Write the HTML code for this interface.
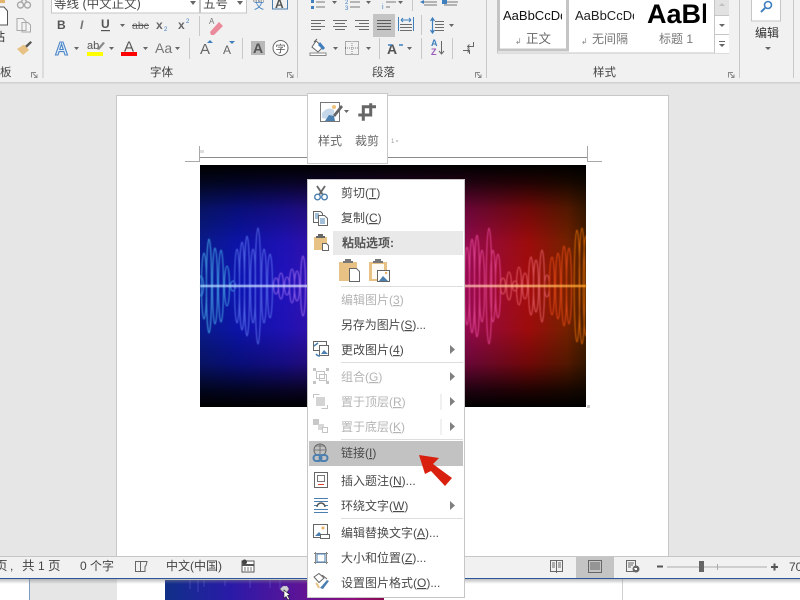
<!DOCTYPE html>
<html><head><meta charset="utf-8"><style>
html,body{margin:0;padding:0;width:800px;height:600px;overflow:hidden;background:#e6e6e6}
svg{display:block}
text{font-family:"Liberation Sans","Noto Sans CJK SC",sans-serif;font-size:12px;fill:#4a4a4a}
.d{fill:#b4b4b4}.b{fill:#333}
.g{font-size:11.5px;fill:#444}
.u{text-decoration:underline}
</style></head><body>
<svg width="800" height="600" viewBox="0 0 800 600" xmlns="http://www.w3.org/2000/svg">
<defs>
<linearGradient id="h" x1="0" x2="1" y1="0" y2="0">
<stop offset="0" stop-color="#0a1c90"/><stop offset=".1" stop-color="#0c14b0"/><stop offset=".22" stop-color="#2012bc"/><stop offset=".38" stop-color="#4c12a4"/><stop offset=".5" stop-color="#701084"/><stop offset=".69" stop-color="#980a50"/><stop offset=".85" stop-color="#a40c0c"/><stop offset=".95" stop-color="#7a2200"/><stop offset="1" stop-color="#4a2000"/>
</linearGradient>
<linearGradient id="h2" x1="0" x2="1" y1="0" y2="0">
<stop offset="0" stop-color="#103088"/><stop offset=".3" stop-color="#2a1aa8"/><stop offset=".6" stop-color="#5a1498"/><stop offset=".85" stop-color="#8c1080"/><stop offset="1" stop-color="#8a0a50"/>
</linearGradient>
<linearGradient id="v" x1="0" x2="0" y1="0" y2="1">
<stop offset="0" stop-color="#000" stop-opacity="1"/><stop offset=".07" stop-color="#000" stop-opacity=".8"/><stop offset=".18" stop-color="#000" stop-opacity=".32"/><stop offset=".32" stop-color="#000" stop-opacity=".05"/><stop offset=".5" stop-color="#000" stop-opacity="0"/><stop offset=".68" stop-color="#000" stop-opacity=".05"/><stop offset=".82" stop-color="#000" stop-opacity=".32"/><stop offset=".93" stop-color="#000" stop-opacity=".8"/><stop offset="1" stop-color="#000" stop-opacity="1"/>
</linearGradient>
<linearGradient id="ln" x1="0" x2="1" y1="0" y2="0">
<stop offset="0" stop-color="#a8d8ff"/><stop offset=".35" stop-color="#e8d8ff"/><stop offset=".6" stop-color="#ffc0d8"/><stop offset=".85" stop-color="#ffc080"/><stop offset="1" stop-color="#ffa020"/>
</linearGradient>
<linearGradient id="sh" x1="0" x2="0" y1="0" y2="1"><stop offset="0" stop-color="#888" stop-opacity=".55"/><stop offset="1" stop-color="#888" stop-opacity="0"/></linearGradient>
<filter id="bl" x="-5%" y="-5%" width="110%" height="110%"><feGaussianBlur stdDeviation=".4"/></filter>
<filter id="bl2" x="-5%" y="-200%" width="110%" height="500%"><feGaussianBlur stdDeviation=".7"/></filter>
<clipPath id="imc"><rect x="200" y="165" width="386" height="242"/></clipPath>
<clipPath id="st1"><rect x="503" y="5" width="59" height="22"/></clipPath>
<clipPath id="st2"><rect x="575" y="5" width="59" height="22"/></clipPath>
<clipPath id="st3"><rect x="647" y="0" width="59" height="30"/></clipPath>
<clipPath id="bimg"><rect x="165" y="580" width="219" height="20"/></clipPath>
</defs>

<!-- workspace -->
<rect width="800" height="600" fill="#e6e6e6"/>
<rect x="116.500" y="95.500" width="552" height="470" fill="#fff" stroke="#c8c8c8"/>

<!-- margin marks -->
<path d="M199.500 146V161.500H185M587.500 146V161.500H602" fill="none" stroke="#a8a8a8"/>
<path d="M200 157.500H587" stroke="#8c8c8c"/>
<path d="M200 150h4v3h-4z" fill="#ddd"/>

<!-- picture -->
<rect x="200" y="165" width="386" height="242" fill="url(#h)"/>
<rect x="200" y="165" width="386" height="242" fill="url(#v)"/>
<g clip-path="url(#imc)"><g fill="none" stroke-width="1.1" opacity=".8" filter="url(#bl)">
<g stroke="#46a8ea"><ellipse cx="201" cy="286" rx="2.500" ry="10"/><ellipse cx="204" cy="286" rx="2.500" ry="33"/><ellipse cx="209" cy="286" rx="2.500" ry="47"/><ellipse cx="215" cy="286" rx="2.500" ry="38"/><ellipse cx="221" cy="286" rx="2.500" ry="36"/><ellipse cx="227" cy="286" rx="2.500" ry="20"/><ellipse cx="233" cy="286" rx="2.500" ry="5"/></g>
<g stroke="#5a72ee"><ellipse cx="237" cy="286" rx="2.500" ry="37"/><ellipse cx="242" cy="286" rx="2.500" ry="44"/><ellipse cx="247" cy="286" rx="2.500" ry="50"/><ellipse cx="253" cy="286" rx="2.500" ry="37"/><ellipse cx="258" cy="286" rx="2.800" ry="58"/><ellipse cx="264" cy="286" rx="2.500" ry="37"/><ellipse cx="270" cy="286" rx="2.500" ry="32"/></g>
<g stroke="#9a6cf0"><ellipse cx="276" cy="286" rx="2.500" ry="8"/><ellipse cx="281" cy="286" rx="2.500" ry="13"/><ellipse cx="287" cy="286" rx="2.500" ry="9"/><ellipse cx="292" cy="286" rx="2.500" ry="17"/><ellipse cx="297" cy="286" rx="2.500" ry="15"/><ellipse cx="303" cy="286" rx="2.500" ry="30"/></g>
<g stroke="#e8489a"><ellipse cx="467" cy="286" rx="2.500" ry="39"/><ellipse cx="472" cy="286" rx="2.500" ry="47"/><ellipse cx="477" cy="286" rx="2.500" ry="51"/><ellipse cx="482" cy="286" rx="2.500" ry="36"/><ellipse cx="489" cy="286" rx="2.800" ry="58"/><ellipse cx="493" cy="286" rx="2.500" ry="36"/><ellipse cx="498" cy="286" rx="2.500" ry="32"/></g>
<g stroke="#e8606a"><ellipse cx="503" cy="286" rx="2.500" ry="8"/><ellipse cx="509" cy="286" rx="2.500" ry="14"/><ellipse cx="515" cy="286" rx="2.500" ry="5"/><ellipse cx="519" cy="286" rx="2.500" ry="19"/><ellipse cx="525" cy="286" rx="2.500" ry="13"/><ellipse cx="531" cy="286" rx="2.500" ry="29"/><ellipse cx="536" cy="286" rx="2.500" ry="26"/><ellipse cx="542" cy="286" rx="2.500" ry="36"/><ellipse cx="547" cy="286" rx="2.500" ry="11"/></g>
<g stroke="#e84a18"><ellipse cx="552" cy="286" rx="2.500" ry="29"/><ellipse cx="558" cy="286" rx="2.500" ry="33"/><ellipse cx="564" cy="286" rx="2.500" ry="40"/><ellipse cx="569" cy="286" rx="2.500" ry="38"/></g>
<g stroke="#e06a08"><ellipse cx="577" cy="286" rx="2.800" ry="56"/><ellipse cx="582" cy="286" rx="2.800" ry="58"/><ellipse cx="586" cy="286" rx="2.800" ry="50"/></g>
</g></g>
<rect x="200" y="285" width="386" height="2" fill="url(#ln)" filter="url(#bl2)"/>
<path d="M587 405h3v3h-3z" fill="#ccc"/>

<!-- ribbon -->
<rect width="800" height="82" fill="#f1f1f1"/>
<rect y="82" width="800" height="1.500" fill="#d0d0d0"/>
<g fill="#c8c8c8">
<rect x="42.500" y="0" width="1" height="78"/><rect x="297" y="0" width="1" height="78"/><rect x="486" y="0" width="1" height="78"/><rect x="739" y="0" width="1" height="78"/><rect x="793" y="0" width="1" height="78"/>
</g>

<!-- clipboard -->
<path d="M-2 7H4L7.500 11V25H-2Z" fill="#fff" stroke="#555"/>
<rect x="0" y="0" width="5" height="3" fill="#e3b46c"/>
<text x="-7" y="41" class="b" style="font-size:12px">粘</text>
<g fill="none" stroke="#a8a8a8" stroke-width="1.400"><circle cx="20.500" cy="5" r="3"/><circle cx="27.500" cy="5" r="3"/><path d="M21 2L25 -3M27 2L23 -3"/></g>
<path d="M17 18.500h6l3 3v9H17zM22 22.500h6l2.500 2.500v7h-8.500z" fill="#f4f4f4" stroke="#a8a8a8"/>
<path d="M30.500 41l1.500 1.500-5.500 5.500-1.800-1.800z" fill="#555"/><path d="M24 44.500l5 5.500-6 5-6-6z" fill="#e8c184"/>
<text x="0" y="76" class="g">板</text>
<g fill="none" stroke="#8a8a8a"><path d="M31.500 77.500V72.500H36M33 73.500L37 77.500M37 74.500V77.500H34"/></g>

<!-- font -->
<rect x="51.500" y="-3" width="148" height="16" fill="#fff" stroke="#c6c6c6"/>
<rect x="200.500" y="-3" width="46" height="16" fill="#fff" stroke="#c6c6c6"/>
<text x="54" y="8" style="font-size:12.500px">等线 (中文正文)</text>
<text x="203" y="8" style="font-size:12.500px">五号</text>
<path d="M190 1h6l-3 4zM237 1h6l-3 4z" fill="#666"/>
<text x="254" y="9" style="font-size:10px;fill:#3f7fbe">文</text>
<path d="M253 1h11" stroke="#666" stroke-dasharray="1.500 1"/>
<rect x="272.500" y="-3" width="15" height="12" fill="none" stroke="#4a7fb0"/>
<text x="275" y="8" style="font-size:12px;font-weight:bold;fill:#555">A</text>
<text x="57" y="29" style="font-size:12px;font-weight:bold;fill:#555">B</text>
<text x="80" y="29" style="font-size:12px;font-style:italic;font-weight:bold;fill:#777">I</text>
<text x="101" y="28" style="font-size:12px;font-weight:bold;fill:#555">U</text>
<rect x="101" y="30" width="9" height="1.200" fill="#555"/>
<text x="132" y="29" style="font-size:10.500px;fill:#666">abc</text>
<rect x="132" y="25" width="17" height="1" fill="#555"/>
<text x="156" y="29" style="font-size:12px;font-weight:bold;fill:#666">x</text>
<text x="164" y="31" style="font-size:6px;fill:#3f7fbe">2</text>
<text x="178" y="29" style="font-size:12px;font-weight:bold;fill:#666">x</text>
<text x="186" y="23" style="font-size:6px;fill:#3f7fbe">2</text>
<path d="M120 24h5l-2.500 3z" fill="#666"/>
<rect x="199" y="16" width="1" height="20" fill="#c8c8c8"/>
<path d="M210 32l9-10 4 4-9 9h-3z" fill="#ea8a9a"/><text x="209" y="24" style="font-size:8px;fill:#777">A</text>
<text x="55" y="55" style="font-size:18px;font-weight:bold;fill:#e4edf7;stroke:#4a86c8;stroke-width:1.100">A</text>
<text x="87" y="49" style="font-size:11px;fill:#555">ab</text>
<path d="M97 49l6-7 2 1-6 7z" fill="#888"/>
<rect x="87" y="52" width="16" height="4" fill="#ff0"/>
<text x="124" y="51.500" style="font-size:15px;fill:#555">A</text>
<rect x="121" y="52" width="16" height="4" fill="#f00"/>
<text x="155" y="53" style="font-size:14px;fill:#777">Aa</text>
<path d="M74 47h5l-2.500 3zM109 47h5l-2.500 3zM143 47h5l-2.500 3zM175 47h5l-2.500 3z" fill="#666"/>
<rect x="189" y="38" width="1" height="21" fill="#c8c8c8"/>
<text x="200" y="54" style="font-size:15px;fill:#666">A</text>
<path d="M207 43h6l-3-3z" fill="#3f7fbe"/>
<text x="223" y="54" style="font-size:12px;fill:#666">A</text>
<path d="M229 41h6l-3 3z" fill="#3f7fbe"/>
<rect x="242" y="38" width="1" height="21" fill="#c8c8c8"/>
<rect x="251" y="41" width="14" height="14" fill="#b8b8b8"/>
<text x="253" y="53" style="font-size:14px;font-weight:bold;fill:#555">A</text>
<circle cx="280.500" cy="48" r="7.500" fill="#fff" stroke="#666"/>
<text x="275.500" y="52.500" style="font-size:10px;fill:#555">字</text>
<text x="150" y="76" class="g">字体</text>
<path d="M287.500 77.500V72.500H292M289 73.500L293 77.500M293 74.500V77.500H290" fill="none" stroke="#8a8a8a"/>

<!-- paragraph row1 -->
<g stroke="#777" fill="none"><path d="M316 2h9M316 7h9M350 2h10M350 7h10M386 2h10M386 7h4M424 2h13M424 5h13M447 2h11M444 5h13"/></g>
<path d="M311 0h3v3h-3zM311 6h3v3h-3z" fill="#3f7fbe"/>
<text x="345" y="4" style="font-size:6px;fill:#3f7fbe">2</text><text x="345" y="10" style="font-size:6px;fill:#3f7fbe">3</text>
<text x="382" y="9" style="font-size:7px;fill:#3f7fbe">i</text>
<path d="M420 2l4-2v4zM442 0h5v4h-5z" fill="#3f7fbe"/>
<path d="M332 1h5l-2.500 3zM366 1h5l-2.500 3zM398 1h5l-2.500 3z" fill="#666"/>
<rect x="412" y="0" width="1" height="11" fill="#c8c8c8"/>
<!-- row2 -->
<rect x="373" y="14" width="22" height="23" fill="#c4c4c4"/>
<g stroke="#6c6c6c" fill="none"><path d="M311 20.500h14M311 23.500h10M311 26.500h14M311 29.500h10M333 20.500h14M335 23.500h10M333 26.500h14M335 29.500h10M355 20.500h14M359 23.500h10M355 26.500h14M359 29.500h10"/><path d="M377 20.500h14M377 23.500h14M377 26.500h14M377 29.500h14" stroke="#5c5c5c"/><path d="M400 24.500h12M400 27.500h12M400 30.500h12" /><path d="M435 21.500h9M435 24.500h9M435 27.500h9M435 30.500h9"/></g>
<path d="M398.500 17v14M413.500 17v14" stroke="#3f7fbe"/>
<path d="M401 20h10M401 20l2-2M401 20l2 2M411 20l-2-2M411 20l-2 2" stroke="#3f7fbe" fill="none"/>
<path d="M432.500 19v13M430.500 21l2-3 2 3M430.500 30l2 3 2-3" stroke="#3f7fbe" fill="none" stroke-width="1.200"/>
<path d="M449 24h5l-2.500 3z" fill="#666"/>
<rect x="421" y="15" width="1" height="20" fill="#c8c8c8"/>
<!-- row3 -->
<path d="M316 41l7 6-5 5-6-5zM314 42l3-3" fill="#fff" stroke="#666"/><path d="M320 42l5 6-2 2-5-5z" fill="#3f7fbe"/>
<rect x="310" y="53" width="16" height="2.500" fill="#fff" stroke="#888"/>
<path d="M333 47h5l-2.500 3zM366 47h5l-2.500 3zM407 47h5l-2.500 3z" fill="#666"/>
<rect x="345.500" y="41.500" width="13" height="13" fill="none" stroke="#666" stroke-dasharray="1 1"/>
<path d="M352 41v14M345 48h14" stroke="#888" stroke-dasharray="1 1"/>
<rect x="379" y="38" width="1" height="21" fill="#c8c8c8"/>
<text x="387" y="54" style="font-size:14px;font-weight:bold;fill:#555">A</text>
<path d="M388 45h4M399 45h4" stroke="#3f7fbe" stroke-width="1.500"/>
<rect x="421" y="38" width="1" height="21" fill="#c8c8c8"/>
<text x="431" y="46" style="font-size:9px;font-weight:bold;fill:#3f7fbe">A</text>
<text x="431" y="55" style="font-size:9px;font-weight:bold;fill:#9a5ab8">Z</text>
<path d="M441.500 41v13M439 51l2.500 3 2.500-3" stroke="#666" fill="none"/>
<rect x="452" y="38" width="1" height="21" fill="#c8c8c8"/>
<path d="M473.500 42v4.500h-6M469.500 44.500l-2 2 2 2M463 50.500h6.500v3.500M467.500 48.500l2 2-2 2" stroke="#666" fill="none"/>
<text x="372" y="76" class="g">段落</text>
<path d="M475.500 77.500V72.500H480M477 73.500L481 77.500M481 74.500V77.500H478" fill="none" stroke="#8a8a8a"/>

<!-- styles -->
<rect x="497.500" y="-3" width="231" height="56" fill="#fff" stroke="#c6c6c6"/>
<rect x="498.500" y="-3" width="69" height="53" fill="#fff" stroke="#c4c4c4" stroke-width="3"/>
<g clip-path="url(#st1)"><text x="503" y="20" style="font-size:13px;fill:#111">AaBbCcDd</text></g>
<g clip-path="url(#st2)"><text x="575" y="20" style="font-size:13px;fill:#222">AaBbCcDd</text></g>
<g clip-path="url(#st3)"><text x="647" y="23" style="font-size:27px;font-weight:bold;fill:#000">AaBbC</text></g>
<text x="526" y="43" style="font-size:12.500px;fill:#666">正文</text>
<text x="592" y="43" style="font-size:12px;fill:#777">无间隔</text>
<text x="659" y="43" style="font-size:12px;fill:#777">标题 1</text>
<text x="515" y="44" style="font-size:8px;fill:#888">↲</text><text x="581" y="44" style="font-size:8px;fill:#888">↲</text>
<rect x="715" y="-3" width="14" height="56" fill="#fff"/>
<rect x="715" y="-3" width="14" height="18" fill="#e2e2e2"/>
<path d="M714.500 -3V53M715 15.500H729M715 34.500H729" stroke="#c6c6c6"/>
<path d="M719 6h6l-3-3z" fill="#c0c0c0"/><path d="M719 24h6l-3 3z" fill="#666"/><path d="M719 41h6v1h-6zM719 44h6l-3 3z" fill="#666"/>
<text x="593" y="76" class="g">样式</text>
<path d="M728.500 77.500V72.500H733M730 73.500L734 77.500M734 74.500V77.500H731" fill="none" stroke="#8a8a8a"/>

<!-- edit -->
<rect x="751.500" y="-3" width="29" height="24" fill="#fff" stroke="#c6c6c6"/>
<circle cx="768" cy="5" r="3.500" fill="none" stroke="#3f7fbe" stroke-width="1.600"/><path d="M765 8l-4 4" stroke="#3f7fbe" stroke-width="2"/>
<text x="755" y="37" style="font-size:12px;fill:#333">编辑</text>
<path d="M765 47h6l-3 3z" fill="#666"/>

<!-- mini toolbar -->
<rect x="307.500" y="93.500" width="80" height="70" fill="#fff" stroke="#c8c8c8"/>
<rect x="320.500" y="102.500" width="19" height="19" fill="#fff" stroke="#777"/>
<path d="M322 113q6-7 12-3v6l-6 3-6-1z" fill="#c6d8ea"/><path d="M325 121l4-6 5 1 1 5z" fill="#4a7fb0"/><circle cx="334" cy="107" r="2" fill="#eec27a"/>
<path d="M333 115l8-10 2 2-8 10z" fill="#666"/>
<path d="M344 110h5l-2.500 3z" fill="#666"/>
<path d="M358.300 115H370.700V103.300M376 106.700H363.300V120.700" fill="none" stroke="#666" stroke-width="3"/>
<text x="318" y="145" style="font-size:12px;fill:#666">样式</text>
<text x="355" y="145" style="font-size:12px;fill:#666">裁剪</text>
<text x="391" y="143" style="font-size:6px;fill:#999">1</text><rect x="396" y="140" width="2" height="2" fill="#ccc"/>

<!-- status bar -->
<rect y="556" width="800" height="1" fill="#c6c6c6"/>
<rect y="557" width="800" height="21" fill="#f1f1f1"/>
<rect x="0" y="579" width="800" height="21" fill="#fff"/>
<rect x="29" y="579" width="1" height="21" fill="#7f9bbd"/>
<rect x="30" y="579" width="87" height="21" fill="#e6e6e6"/>
<rect x="622" y="579" width="1" height="21" fill="#d0d0d0"/>
<rect x="165" y="580" width="219" height="20" fill="url(#h2)"/>
<g clip-path="url(#bimg)" stroke="#6a6ae0" opacity=".45" fill="none"><path d="M190 580v9M198 580v12M204 580v7M225 580v6M250 580v8M270 580v8M280 580v9"/></g>
<rect x="0" y="579" width="800" height="5" fill="url(#sh)"/>
<rect y="578" width="800" height="1" fill="#2b579a"/>
<text x="-5" y="570" style="font-size:12.500px;fill:#444">页</text>
<text x="10" y="570" style="font-size:12px;fill:#444">,</text>
<text x="22" y="570" style="font-size:12.500px;fill:#444">共</text>
<text x="38" y="570" style="font-size:12px;fill:#444">1</text>
<text x="48" y="570" style="font-size:12.500px;fill:#444">页</text>
<text x="80" y="570" style="font-size:12px;fill:#444">0 个字</text>
<path d="M135.500 561.500h5v10h-5zM141 561.500h6l-1 4-1 1v5h-4" fill="none" stroke="#666"/>
<text x="166" y="570" style="font-size:12px;fill:#444">中文(中国)</text>
<rect x="242" y="561" width="12" height="11" fill="#fff" stroke="#555"/>
<path d="M242 564h12v2h-12z" fill="#555"/><path d="M244 568h8M244 570h8" stroke="#777" stroke-dasharray="2 1"/>
<circle cx="244.500" cy="562" r="2.500" fill="#444"/>
<path d="M550.500 560.500h12v11h-12zM556.500 560v13M552 563h3M552 565h3M552 567h3M558 563h3M558 565h3M558 567h3" fill="none" stroke="#666"/>
<rect x="576" y="557" width="38" height="21" fill="#c4c4c4"/>
<path d="M588.500 560.500h13v12h-13zM590 563h10M590 565h10M590 567h10M590 569h10" fill="none" stroke="#666"/>
<path d="M626.500 560.500h9v11h-9zM628 563h6M628 565h5M628 567h3" fill="none" stroke="#666"/>
<circle cx="636" cy="569" r="3.500" fill="#666"/><path d="M634 568h3v2h-2z" fill="#fff"/>
<path d="M657 566.500h6" stroke="#555" stroke-width="2"/>
<rect x="667" y="566.500" width="100" height="1" fill="#aaa"/>
<rect x="717" y="564" width="1" height="6" fill="#aaa"/>
<rect x="699" y="561" width="5" height="11" fill="#666"/>
<path d="M771 567h7M774.500 563.500v7" stroke="#555" stroke-width="2"/>
<text x="789" y="571" style="font-size:12px;fill:#444">70</text>
<path d="M280 589l3-3 4 0 2 3-2 3-4 0z" fill="#cfcfd8" stroke="#666" stroke-width=".6" stroke-dasharray="1 1"/>
<path d="M284 590l6 5-2.500.5 2 3.500-1.500 1-2-3.500-2 2z" fill="#fff" stroke="#222" stroke-width=".6"/>

<!-- context menu -->
<rect x="307.500" y="179.500" width="157" height="418" fill="#fff" stroke="#c6c6c6"/>
<rect x="333" y="231" width="130" height="24" fill="#e9e9e9"/>
<path d="M341 286.500h122M341 362.500h122M341 439.500h122M341 518.500h122" stroke="#ddd"/>
<path d="M441 394v16M441 419v16" stroke="#e2e2e2"/>
<rect x="309" y="441" width="154" height="25" fill="#c2c2c2"/>

<text x="341" y="197">剪切(<tspan class="u">T</tspan>)</text>
<text x="341" y="222">复制(<tspan class="u">C</tspan>)</text>
<text x="342" y="247" style="font-size:12px;font-weight:bold;fill:#555">粘贴选项:</text>
<text x="341" y="304" class="d">编辑图片(<tspan class="u">3</tspan>)</text>
<text x="341" y="329" style="letter-spacing:-.1px">另存为图片(<tspan class="u">S</tspan>)...</text>
<text x="341" y="354">更改图片(<tspan class="u">4</tspan>)</text>
<text x="341" y="381" class="d">组合(<tspan class="u">G</tspan>)</text>
<text x="341" y="406" class="d">置于顶层(<tspan class="u">R</tspan>)</text>
<text x="341" y="431" class="d">置于底层(<tspan class="u">K</tspan>)</text>
<text x="341" y="457">链接(<tspan class="u">I</tspan>)</text>
<text x="341" y="485">插入题注(<tspan class="u">N</tspan>)...</text>
<text x="341" y="510">环绕文字(<tspan class="u">W</tspan>)</text>
<text x="341" y="537">编辑替换文字(<tspan class="u">A</tspan>)...</text>
<text x="341" y="562">大小和位置(<tspan class="u">Z</tspan>)...</text>
<text x="341" y="587">设置图片格式(<tspan class="u">O</tspan>)...</text>

<path d="M450 345l5 4.500-5 4.500zM450 372l5 4.500-5 4.500zM450 397l5 4.500-5 4.500zM450 422l5 4.500-5 4.500zM450 501l5 4.500-5 4.500z" fill="#808080"/>

<!-- menu icons -->
<path d="M317 186l6 9M325 186l-6 9" stroke="#666" stroke-width="1.800" fill="none"/>
<circle cx="317.500" cy="197" r="2.800" fill="none" stroke="#4a7fb0" stroke-width="1.400"/><circle cx="324.500" cy="197" r="2.800" fill="none" stroke="#4a7fb0" stroke-width="1.400"/>
<path d="M313.500 211.500h7l2 2v9h-9z" stroke="#666" fill="#fff"/>
<path d="M318.500 215.500h6l3 3v7h-9z" stroke="#666" fill="#fff"/>
<path d="M315 214h4M315 216h3M315 218h3M320 219h5M320 221h5M320 223h5" stroke="#4a7fb0" fill="none"/>
<path d="M314 237h13v13h-13z" fill="#e8c184"/>
<path d="M318 234h5v3h-5zM316 236h9v2h-9z" fill="#666"/>
<path d="M322.500 243.500h4l2 2v5h-6z" fill="#fff" stroke="#666"/>

<path d="M339 262h18v19h-18z" fill="#e8c184"/>
<path d="M345 259h6v3h-6zM343 261h10v2h-10z" fill="#777"/>
<path d="M349.500 268.500h7l3 3v10h-10z" fill="#fff" stroke="#666"/>
<path d="M369 262h18v19h-18z" fill="#e8c184"/><rect x="372" y="264" width="12" height="15" fill="#fff" opacity=".9"/>
<path d="M375 259h6v3h-6zM373 261h10v2h-10z" fill="#777"/>
<rect x="377.500" y="270.500" width="12" height="11" fill="#fff" stroke="#666"/>
<path d="M379 281l4-5 2 2 3 3z" fill="#4a7fb0"/><circle cx="386" cy="273" r="1.200" fill="#e8b060"/>

<!-- change image -->
<path d="M313.500 341.500h13v9h-13z" fill="#fff" stroke="#666"/><rect x="319.500" y="345.500" width="9" height="10" fill="#fff" stroke="#666"/>
<path d="M321 354l3-4 4 4z" fill="#4a7fb0"/>
<path d="M314 346l4-3 M316 354a5 5 0 0 0 4 2" stroke="#4a7fb0" stroke-width="1.500" fill="none"/>
<!-- group -->
<g fill="#c4c4c4"><rect x="313" y="368" width="3" height="3"/><rect x="326" y="368" width="3" height="3"/><rect x="313" y="381" width="3" height="3"/><rect x="326" y="381" width="3" height="3"/></g>
<rect x="316.500" y="371.500" width="8" height="7" fill="none" stroke="#c4c4c4"/><rect x="319.500" y="374.500" width="7" height="6" fill="none" stroke="#c4c4c4"/>
<!-- top -->
<path d="M313.500 398v-3.500h6M327.500 405v3.500h-6" fill="none" stroke="#c4c4c4"/><rect x="316" y="397" width="9" height="9" fill="#d4d4d4"/>
<!-- bottom -->
<rect x="313" y="419" width="6" height="6" fill="#c8c8c8"/><rect x="318" y="424" width="6" height="6" fill="#d8d8d8"/><rect x="322.500" y="427.500" width="5" height="5" fill="#fff" stroke="#c4c4c4"/>
<!-- link -->
<circle cx="320" cy="450" r="6" fill="none" stroke="#666"/><path d="M314 450h12M320 444v11M316 446h8" stroke="#666" stroke-width=".8" fill="none"/>
<rect x="313.500" y="455" width="8" height="6" rx="3" fill="#c2c2c2" stroke="#4a7fb0" stroke-width="2"/><rect x="319.500" y="455" width="8" height="6" rx="3" fill="none" stroke="#4a7fb0" stroke-width="2"/>
<!-- caption -->
<rect x="314.500" y="472.500" width="13" height="15" fill="#fff" stroke="#666"/><rect x="317.500" y="475.500" width="7" height="6" fill="none" stroke="#777"/><path d="M318 484.500h6" stroke="#d8402a"/>
<!-- wrap -->
<path d="M314 498.500h14M314 501.500h14M314 509.500h14M314 512.500h14M314 505.500h3M325 505.500h3" stroke="#4a7fb0" fill="none"/>
<path d="M317 507a4 4 0 0 1 8 0" stroke="#555" stroke-width="1.500" fill="none"/>
<!-- alt text -->
<rect x="313.500" y="524.500" width="14" height="13" fill="#fff" stroke="#666"/>
<path d="M315 536l4-4 3 3v1z" fill="#4a7fb0"/><circle cx="323" cy="528" r="1.500" fill="#e8b060"/>
<rect x="320.500" y="534.500" width="9" height="4" fill="#fff" stroke="#666"/>
<!-- size -->
<path d="M315.500 552v12M326.500 552v12M314 553.500h14M314 562.500h14" stroke="#888" fill="none"/>
<rect x="317" y="554" width="8" height="8" fill="#fff" stroke="#4a7fb0"/>
<!-- format -->
<path d="M314 577l5-3.500 5 4.500-5 4.500z" fill="#fff" stroke="#666"/><path d="M320 588l7-8 2 1-6 8z" fill="#4a7fb0"/><path d="M316 583q2 2 3 5" stroke="#e8c184" stroke-width="2" fill="none"/>
<path d="M322 575l5 4" stroke="#666" fill="none"/>

<!-- red arrow -->
<polygon points="419,455 439,458 433,464 452,478 445,486 431,471 425,474" fill="#d9200e"/>
</svg>
</body></html>
